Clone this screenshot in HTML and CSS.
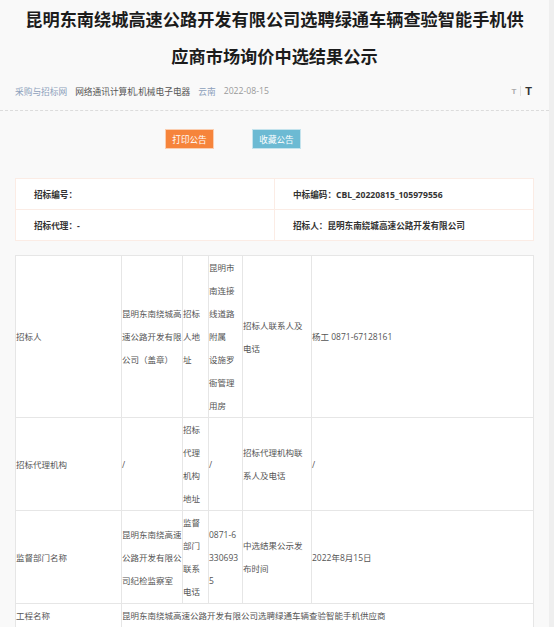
FILE: index.html
```html
<!DOCTYPE html>
<html lang="zh-CN">
<head>
    <meta charset="UTF-8">
    <meta name="viewport" content="width=device-width, initial-scale=1.0">
    <title>中选结果公示</title>
    <link rel="stylesheet" href="styles.css">
</head>
<body>
    <div class="page">
        <div class="header">
            <h1 class="title">昆明东南绕城高速公路开发有限公司选聘绿通车辆查验智能手机供应商市场询价中选结果公示</h1>
            <div class="meta">
                <span class="meta-link">采购与招标网</span>
                <span class="meta-cat">网络通讯计算机,机械电子电器</span>
                <span class="meta-link">云南</span>
                <span class="meta-date">2022-08-15</span>
                <span class="font-size">
                    <span class="t-small">T</span>
                    <span class="t-sep"></span>
                    <span class="t-big">T</span>
                </span>
            </div>
        </div>

        <div class="content">
            <div class="actions">
                <button class="btn btn-print">打印公告</button>
                <button class="btn btn-fav">收藏公告</button>
            </div>

            <table class="info">
                <tr>
                    <td>招标编号：</td>
                    <td>中标编码：CBL_20220815_105979556</td>
                </tr>
                <tr>
                    <td>招标代理：-</td>
                    <td>招标人：昆明东南绕城高速公路开发有限公司</td>
                </tr>
            </table>

            <table class="detail">
                <colgroup>
                    <col style="width: 106px">
                    <col style="width: 61px">
                    <col style="width: 26px">
                    <col style="width: 34px">
                    <col style="width: 69px">
                    <col>
                </colgroup>
                <tr>
                    <td>招标人</td>
                    <td>昆明东南绕城高速公路开发有限公司（盖章）</td>
                    <td>招标人地址</td>
                    <td class="narrow">昆明市南连接线道路附属　设施罗衙管理用房</td>
                    <td class="narrow">招标人联系人及电话</td>
                    <td>杨工 0871-67128161</td>
                </tr>
                <tr>
                    <td>招标代理机构</td>
                    <td>/</td>
                    <td>招标代理机构地址</td>
                    <td class="narrow">/</td>
                    <td class="narrow">招标代理机构联系人及电话</td>
                    <td>/</td>
                </tr>
                <tr>
                    <td>监督部门名称</td>
                    <td>昆明东南绕高速公路开发有限公司纪检监察室</td>
                    <td>监督部门联系电话</td>
                    <td class="narrow">0871-63306935</td>
                    <td class="narrow">中选结果公示发布时间</td>
                    <td>2022年8月15日</td>
                </tr>
                <tr>
                    <td>工程名称</td>
                    <td colspan="5">昆明东南绕城高速公路开发有限公司选聘绿通车辆查验智能手机供应商</td>
                </tr>
                <tr>
                    <td>&nbsp;</td>
                    <td colspan="5">&nbsp;</td>
                </tr>
            </table>
        </div>
    </div>
</body>
</html>
```

FILE: styles.css
```css
html {
    background: linear-gradient(to left, #efefef 5px, #f9f9f9 5px);
}

body {
    margin: 0;
    font-family: "Open Sans", "Noto Sans CJK SC", sans-serif;
    color: #555;
}

.page {
    width: 549px;
}

.header {
    padding: 0 15px 9px;
    border-bottom: 1px dashed #dcdcdc;
}

.title {
    margin: 0;
    padding: 0 5px;
    font-family: "Noto Sans CJK SC", sans-serif;
    font-size: 17.2px;
    line-height: 37px;
    font-weight: bold;
    text-align: center;
    color: #1c1c1c;
}

.meta {
    display: flex;
    align-items: center;
    gap: 8px;
    height: 20px;
    margin-top: 7px;
    font-size: 8.7px;
}

.meta-link {
    color: #8c9fbb;
}

.meta-cat {
    color: #555;
}

.meta-date {
    color: #999;
}

.font-size {
    display: flex;
    align-items: center;
    margin-left: auto;
    margin-right: 2px;
    font-family: "Liberation Sans", sans-serif;
    font-weight: bold;
}

.t-small {
    font-size: 8px;
    color: #aaa;
}

.t-sep {
    width: 1px;
    height: 10px;
    margin: 0 4px;
    background: #e2e2e2;
}

.t-big {
    font-size: 11px;
    color: #333;
}

.content {
    padding: 18px 15px 0;
}

.actions {
    display: flex;
    gap: 38px;
    margin-left: 150px;
    margin-bottom: 29px;
}

.btn {
    width: 49px;
    height: 20px;
    padding: 0;
    border: 1px solid rgba(255, 255, 255, 0.6);
    font-family: "Noto Sans CJK SC", sans-serif;
    font-size: 8.6px;
    color: #fff;
    cursor: pointer;
}

.btn-print {
    background: #f6843b;
}

.btn-fav {
    background: #6cbad3;
}

.info {
    width: 100%;
    border-collapse: collapse;
    background: #fff;
    table-layout: fixed;
}

.info td {
    height: 30px;
    padding: 0 18px;
    border: 1px solid #fbece5;
    font-size: 8.6px;
    font-weight: bold;
    color: #333;
}

.detail {
    width: 100%;
    margin-top: 14px;
    border-collapse: collapse;
    table-layout: fixed;
    background: #fff;
}

.detail td {
    padding: 0;
    border: 1px solid #e6e6e6;
    font-size: 8.5px;
    line-height: 23px;
    word-break: break-all;
    vertical-align: middle;
}

.detail td.narrow {
    padding-right: 2px;
}
```
